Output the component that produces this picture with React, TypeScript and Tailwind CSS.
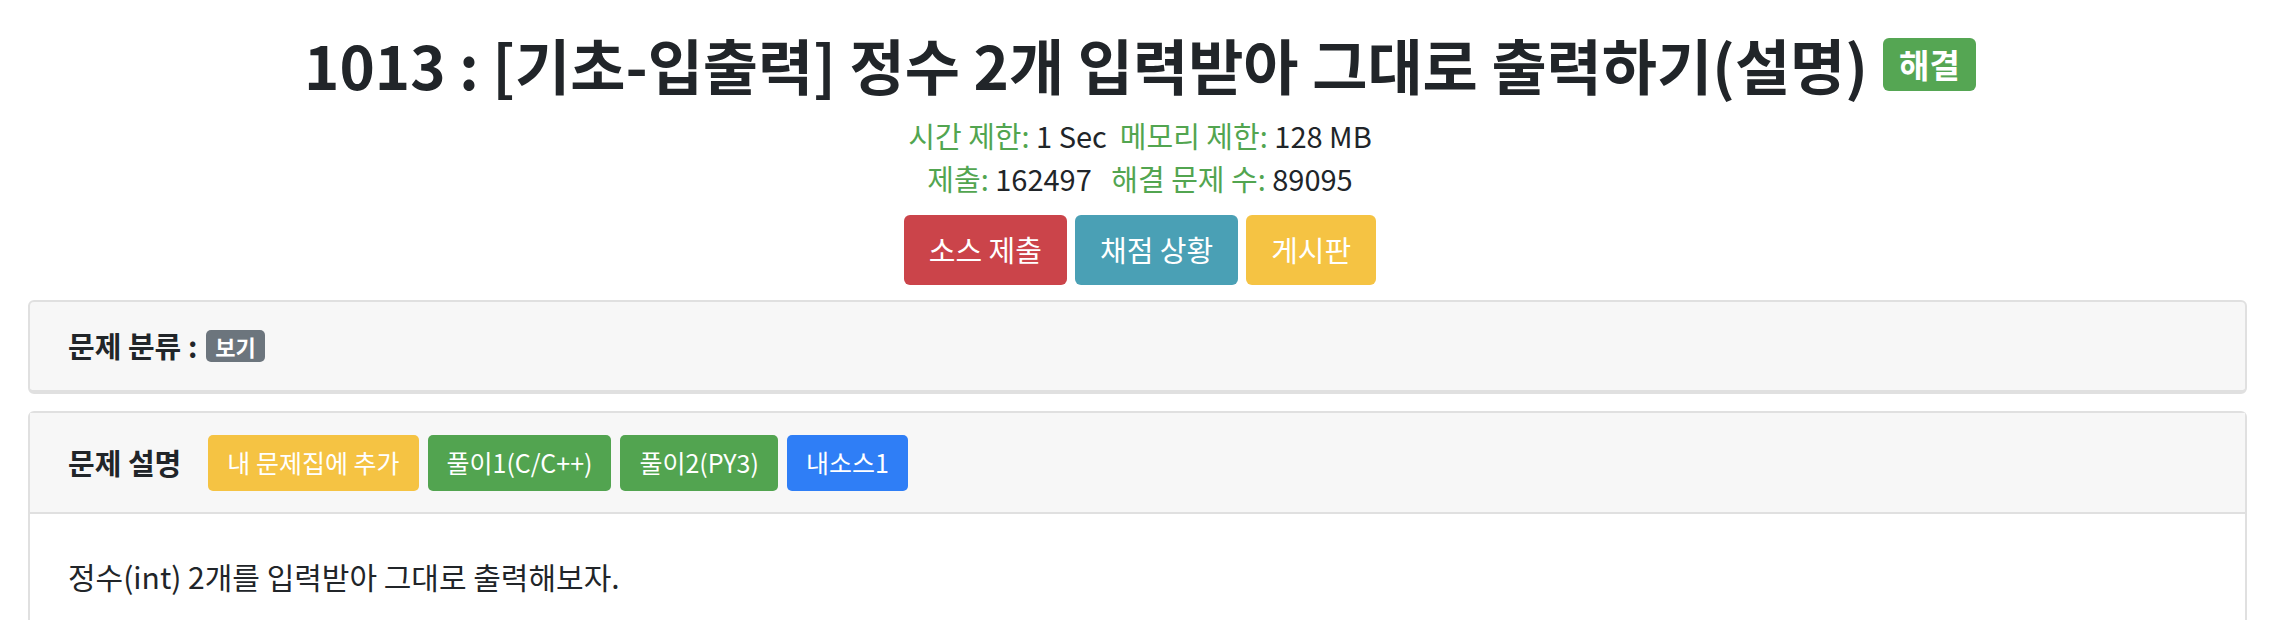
const FONT = "font-['Noto_Sans_CJK_KR','Noto_Sans',sans-serif]";

interface BtnProps {
  label: string;
  color: string;
}

const HeaderButton = (props: BtnProps) => (
  <div
    className={`flex h-[70px] items-center rounded-[6px] px-[25px] text-[29px] text-white ${props.color}`}
  >
    {props.label}
  </div>
);

const SmallButton = (props: BtnProps) => (
  <div
    className={`flex h-[56px] items-center rounded-[5px] px-[19px] text-[25px] text-white ${props.color}`}
  >
    {props.label}
  </div>
);

const App = () => {
  return (
    <div className={`min-h-[620px] bg-white text-[#212529] ${FONT}`}>
      <div className="flex flex-col items-center pt-[28px]">
        <h1 className="flex items-center gap-[15px] text-[60px] font-bold leading-[72px]">
          <span>1013 : [기초-입출력] 정수 2개 입력받아 그대로 출력하기(설명)</span>
          <span className="flex h-[53px] w-[93px] items-center justify-center rounded-[6px] bg-[#55a653] text-[33px] leading-none text-white">
            해결
          </span>
        </h1>
        <div className="mt-[14px] flex flex-col items-center text-[29px] leading-[43px]">
          <div>
            <span className="text-[#52a550]">시간 제한: </span>1 Sec{"\u00a0 "}
            <span className="text-[#52a550]">메모리 제한: </span>128 MB
          </div>
          <div>
            <span className="text-[#52a550]">제출: </span>162497{"\u00a0\u00a0 "}
            <span className="text-[#52a550]">해결 문제 수: </span>89095
          </div>
        </div>
        <div className="mt-[15px] flex gap-[8px]">
          <HeaderButton label="소스 제출" color="bg-[#cb444a]" />
          <HeaderButton label="채점 상황" color="bg-[#4aa0b5]" />
          <HeaderButton label="게시판" color="bg-[#f5c343]" />
        </div>
      </div>

      <div className="ml-[28px] mr-[33px] mt-[15px] flex flex-col gap-[17px]">
        <div className="rounded-[6px] border-2 border-b-[4px] border-[#e0e0e0] bg-[#f7f7f7]">
          <div className="flex h-[88px] items-center gap-[9px] pl-[38px]">
            <span className="text-[29px] font-bold">문제 분류 :</span>
            <span className="flex h-[32px] items-center rounded-[5px] bg-[#6c757d] px-[9px] text-[22px] font-bold text-white">
              보기
            </span>
          </div>
        </div>

        <div className="rounded-t-[6px] border-2 border-b-0 border-[#e0e0e0]">
          <div className="flex h-[101px] items-center border-b-2 border-[#e0e0e0] bg-[#f7f7f7] pl-[38px]">
            <span className="mr-[27px] text-[29px] font-bold">문제 설명</span>
            <div className="flex gap-[9px]">
              <SmallButton label="내 문제집에 추가" color="bg-[#f5c343]" />
              <SmallButton label="풀이1(C/C++)" color="bg-[#52a450]" />
              <SmallButton label="풀이2(PY3)" color="bg-[#52a450]" />
              <SmallButton label="내소스1" color="bg-[#2f7ef6]" />
            </div>
          </div>
          <div className="h-[120px] bg-white pl-[38px] pt-[40px] text-[30px]">
            정수(int) 2개를 입력받아 그대로 출력해보자.
          </div>
        </div>
      </div>
    </div>
  );
};

export default App;
